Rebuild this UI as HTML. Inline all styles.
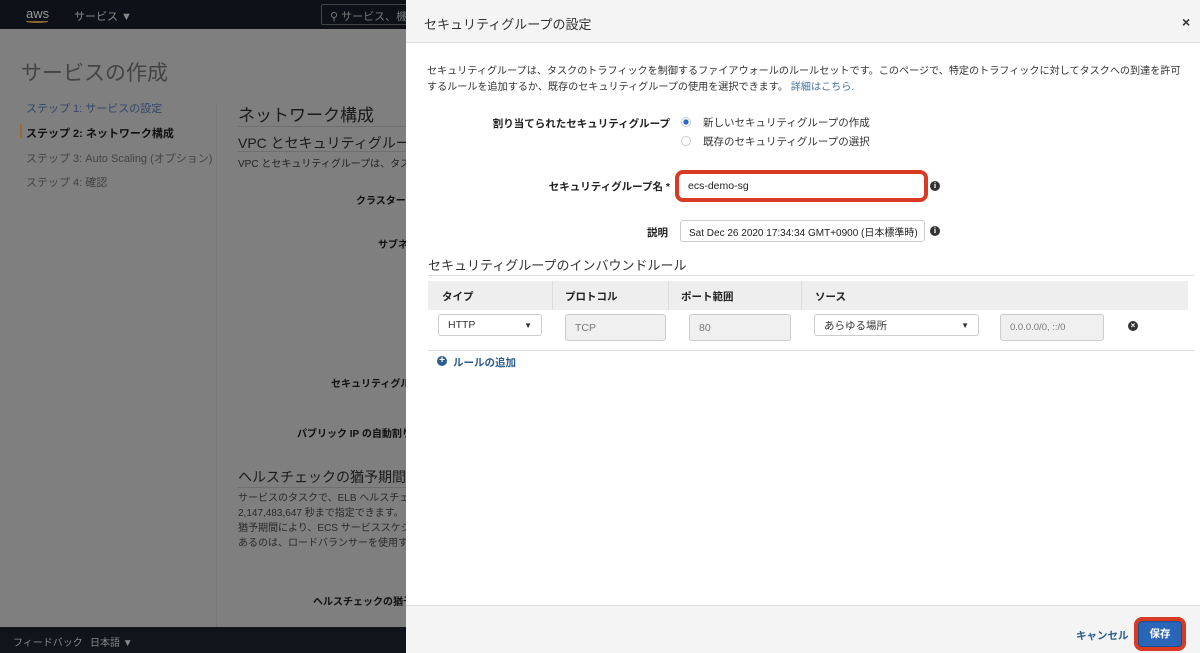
<!DOCTYPE html>
<html><head><meta charset="utf-8"><style>
*{margin:0;padding:0;box-sizing:border-box}
body{width:1200px;height:653px;overflow:hidden;position:relative;background:#7f7f7f;font-family:"Liberation Sans","Noto Sans CJK JP",sans-serif;color:#222}
.abs{position:absolute;white-space:nowrap}
.top{position:absolute;left:0;top:0;width:1200px;height:29px;background:#0e1117}
.bot{position:absolute;left:0;top:627px;width:1200px;height:26px;background:#11151b}
.modal{position:absolute;left:406px;top:0;width:794px;height:653px;background:#fff}
.mh{position:absolute;left:0;top:0;width:794px;height:43px;background:#f4f4f4;border-bottom:1px solid #ddd}
.mf{position:absolute;left:0;top:605px;width:794px;height:48px;background:#f4f4f4;border-top:1px solid #ddd}
.lbl{font-weight:bold;font-size:10.5px;color:#222}
.rl{position:absolute;right:530px;text-align:right;white-space:nowrap}
.inp{position:absolute;border:1px solid #ccc;border-radius:3px;background:#fff;font-size:10.5px;color:#333;padding-left:9px;display:flex;align-items:center;white-space:nowrap;overflow:hidden}
.dis{background:#f0f0f0;color:#777}
.info{position:absolute;width:10px;height:10px;border-radius:50%;background:#333;color:#fff;font-size:8px;font-weight:bold;text-align:center;line-height:10px;font-family:"Liberation Serif",serif}
</style></head><body>
<div class="top"></div>
<div class="abs" style="left:26px;top:6px;color:#9a9a9a;font-size:13px">aws</div>
<div class="abs" style="left:26px;top:20px;width:22px;height:3px;border-bottom:2px solid #8a6a30;border-radius:0 0 50% 50%"></div>
<div class="abs" style="left:74px;top:8px;color:#888;font-size:11px">サービス ▼</div>
<div class="abs" style="left:321px;top:4px;width:90px;height:21px;border:1px solid #444;border-radius:2px;color:#777;font-size:11px;padding:3px 0 0 8px">⚲ サービス、機</div>
<div class="abs" style="left:21px;top:57px;font-size:21px;color:#444">サービスの作成</div>
<div class="abs" style="left:26px;top:100px;font-size:11px;color:#34476a">ステップ 1: サービスの設定</div>
<div class="abs" style="left:20px;top:124px;width:2px;height:14px;background:#9a6a30"></div>
<div class="abs" style="left:26px;top:125px;font-size:11px;font-weight:bold;color:#111">ステップ 2: ネットワーク構成</div>
<div class="abs" style="left:26px;top:150px;font-size:11px;color:#444">ステップ 3: Auto Scaling (オプション)</div>
<div class="abs" style="left:26px;top:174px;font-size:11px;color:#444">ステップ 4: 確認</div>
<div class="abs" style="left:216px;top:103px;width:1px;height:524px;background:#777"></div>
<div class="abs" style="left:238px;top:101px;font-size:17px;color:#1a1a1a">ネットワーク構成</div>
<div class="abs" style="left:238px;top:126px;width:168px;height:1px;background:#6f6f6f"></div>
<div class="abs" style="left:238px;top:133px;font-size:14px;color:#1a1a1a">VPC とセキュリティグループ</div>
<div class="abs" style="left:238px;top:151px;width:168px;height:1px;background:#6f6f6f"></div>
<div class="abs" style="left:238px;top:155px;font-size:10px;color:#222">VPC とセキュリティグループは、タス</div>
<div class="abs" style="left:356px;top:192px;font-size:10px;font-weight:bold;color:#111">クラスター</div>
<div class="abs" style="left:378px;top:236px;font-size:10px;font-weight:bold;color:#111">サブネ</div>
<div class="abs" style="left:331px;top:375px;font-size:10px;font-weight:bold;color:#111">セキュリティグル</div>
<div class="abs" style="left:297px;top:425px;font-size:10px;font-weight:bold;color:#111">パブリック IP の自動割り</div>
<div class="abs" style="left:238px;top:467px;font-size:14px;color:#1a1a1a">ヘルスチェックの猶予期間</div>
<div class="abs" style="left:238px;top:487px;width:168px;height:1px;background:#6f6f6f"></div>
<div class="abs" style="left:238px;top:491px;font-size:10px;line-height:15px;color:#2a2a2a">サービスのタスクで、ELB ヘルスチェ<br>2,147,483,647 秒まで指定できます。<br>猶予期間により、ECS サービススケジ<br>あるのは、ロードバランサーを使用す</div>
<div class="abs" style="left:313px;top:593px;font-size:10px;font-weight:bold;color:#111">ヘルスチェックの猶予</div>
<div class="bot"></div>
<div class="abs" style="left:13px;top:634px;font-size:10px;color:#888">フィードバック</div>
<div class="abs" style="left:90px;top:634px;font-size:10px;color:#888">日本語 ▼</div>

<div class="modal">
<div class="mh"></div>
<div class="abs" style="left:18px;top:14px;font-size:13px;color:#333">セキュリティグループの設定</div>
<div class="abs" style="left:776px;top:14px;font-size:14px;font-weight:bold;color:#333">×</div>
<div class="abs" style="left:21px;top:64px;font-size:10.1px;line-height:16px;color:#333">セキュリティグループは、タスクのトラフィックを制御するファイアウォールのルールセットです。このページで、特定のトラフィックに対してタスクへの到達を許可<br>するルールを追加するか、既存のセキュリティグループの使用を選択できます。 <span style="color:#44709a">詳細はこちら.</span></div>
<div class="rl lbl" style="top:116px">割り当てられたセキュリティグループ</div>
<div class="abs" style="left:275px;top:117px;width:10px;height:10px;border-radius:50%;border:1px solid #ccc;background:radial-gradient(#2b6cc2 45%,#fff 50%)"></div>
<div class="abs" style="left:297px;top:115px;font-size:10.5px;color:#333">新しいセキュリティグループの作成</div>
<div class="abs" style="left:275px;top:136px;width:10px;height:10px;border-radius:50%;border:1px solid #ccc"></div>
<div class="abs" style="left:297px;top:134px;font-size:10.5px;color:#333">既存のセキュリティグループの選択</div>
<div class="rl lbl" style="top:179px">セキュリティグループ名 *</div>
<div class="inp" style="left:269px;top:170px;width:253px;height:32px;border:4px solid #d83a23;border-radius:8px;color:#222">ecs-demo-sg</div>
<div class="info" style="left:524px;top:181px">i</div>
<div class="rl lbl" style="top:225px;right:532px">説明</div>
<div class="inp" style="left:274px;top:220px;width:245px;height:22px;color:#222;font-size:10px;padding-left:8px">Sat Dec 26 2020 17:34:34 GMT+0900 (日本標準時)</div>
<div class="info" style="left:524px;top:226px">i</div>
<div class="abs" style="left:22px;top:255px;font-size:13px;color:#333">セキュリティグループのインバウンドルール</div>
<div class="abs" style="left:22px;top:275px;width:766px;height:1px;background:#ddd"></div>
<div class="abs" style="left:22px;top:281px;width:760px;height:29px;background:#eee"></div>
<div class="abs" style="left:146px;top:281px;width:1px;height:29px;background:#ddd"></div>
<div class="abs" style="left:262px;top:281px;width:1px;height:29px;background:#ddd"></div>
<div class="abs" style="left:395px;top:281px;width:1px;height:29px;background:#ddd"></div>
<div class="abs lbl" style="left:36px;top:289px">タイプ</div>
<div class="abs lbl" style="left:159px;top:289px">プロトコル</div>
<div class="abs lbl" style="left:275px;top:289px">ポート範囲</div>
<div class="abs lbl" style="left:409px;top:289px">ソース</div>
<div class="inp" style="left:32px;top:314px;width:104px;height:22px">HTTP<span style="position:absolute;right:9px;font-size:8px;color:#333">▼</span></div>
<div class="inp dis" style="left:159px;top:314px;width:101px;height:27px">TCP</div>
<div class="inp dis" style="left:283px;top:314px;width:102px;height:27px">80</div>
<div class="inp" style="left:408px;top:314px;width:165px;height:22px">あらゆる場所<span style="position:absolute;right:9px;font-size:8px;color:#333">▼</span></div>
<div class="inp dis" style="left:594px;top:314px;width:104px;height:27px;font-size:9.5px">0.0.0.0/0, ::/0</div>
<div class="abs" style="left:722px;top:321px;width:10px;height:10px;border-radius:50%;background:#333;color:#fff;font-size:8px;line-height:10px;text-align:center;font-weight:bold">×</div>
<div class="abs" style="left:22px;top:350px;width:766px;height:1px;background:#ddd"></div>
<div class="abs" style="left:31px;top:356px;width:10px;height:10px;border-radius:50%;background:#2c5d8e;color:#fff;font-size:10px;line-height:10px;text-align:center;font-weight:bold">+</div>
<div class="abs" style="left:47px;top:355px;font-size:10.5px;font-weight:bold;color:#2c5d8e">ルールの追加</div>
<div class="mf"></div>
<div class="abs" style="left:670px;top:628px;font-size:10.5px;font-weight:bold;color:#2c5d8e">キャンセル</div>
<div class="abs" style="left:728px;top:617px;width:52px;height:34px;border:4px solid #d83a23;border-radius:8px;background:#2a66b8;color:#fff;font-size:10.5px;font-weight:bold;text-align:center;line-height:26px;box-shadow:inset 0 0 0 1px #1b4d8c">保存</div>
</div>
</body></html>
